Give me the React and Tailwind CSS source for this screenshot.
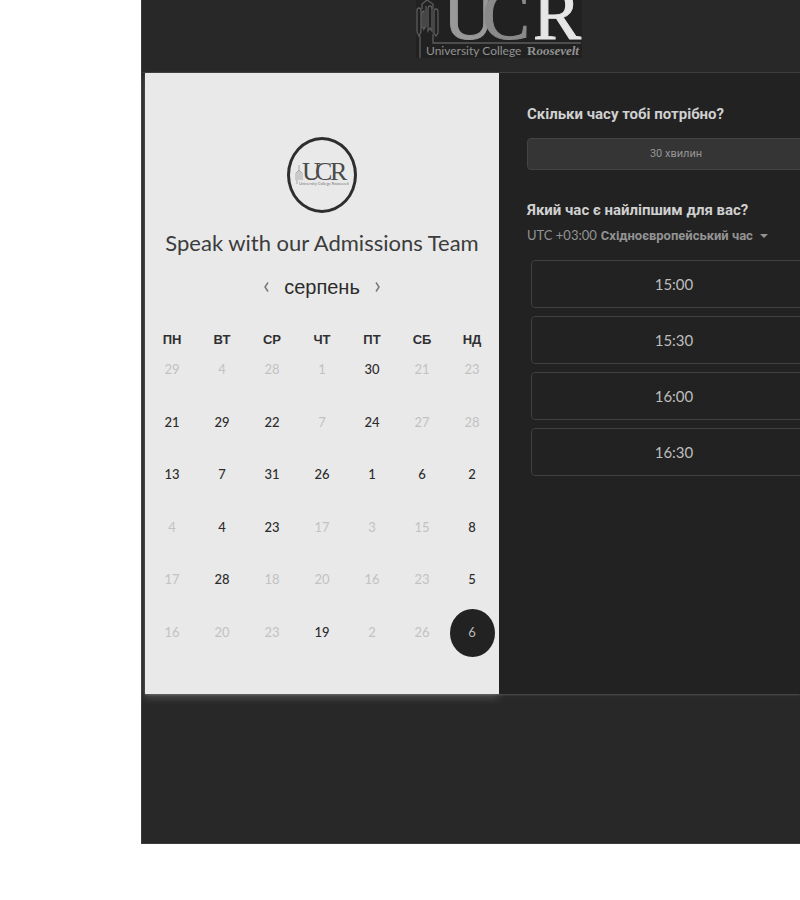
import React, { useState } from "react";

const weekdays = ["ПН", "ВТ", "СР", "ЧТ", "ПТ", "СБ", "НД"];

// A leading "*" marks a day that can be booked.
const weeks = [
  ["29", "4", "28", "1", "*30", "21", "23"],
  ["*21", "*29", "*22", "7", "*24", "27", "28"],
  ["*13", "*7", "*31", "*26", "*1", "*6", "*2"],
  ["4", "*4", "*23", "17", "3", "15", "*8"],
  ["17", "*28", "18", "20", "16", "23", "*5"],
  ["16", "20", "23", "*19", "2", "26", "*6"],
];

const slots = ["15:00", "15:30", "16:00", "16:30"];

function Tower() {
  return (
    <g fill="none" stroke="#5c5c5c" strokeWidth="1.3">
      <path d="M4 58V36M17 34V43H165M11 0V-6M11 0L6 4V9M11 0L17 4V9" />
      <path d="M1 11Q1 8 3 8Q5 8 5 11V32L3 36L1 32Z" />
      <path d="M6 14Q6 11 8 11V29L10 26V6M8 29L6 27V14" />
      <path d="M12 10Q12 6 14 6Q16 6 16 10V31L14 28L12 31Z" />
      <path d="M18 12Q18 9 20 9Q22 9 22 12V33L20 36L18 33Z" />
    </g>
  );
}

function HeaderLogo() {
  return (
    <svg viewBox="0 0 166 58" className="h-[58px] w-[166px]" role="img" aria-label="University College Roosevelt">
      <rect width="166" height="58" fill="#212121" />
      <Tower />
      <g fontFamily="'Liberation Serif', serif" fontSize="72">
        <text x="27" y="39" fill="#999999" stroke="#999999">U</text>
        <text x="66" y="39" fill="#8a8a8a" stroke="#8a8a8a">C</text>
        <text x="117" y="39" fill="#e6e6e6" stroke="#e6e6e6">R</text>
      </g>
      <text x="10" y="55" fontFamily="Lato, sans-serif" fontSize="12" fill="#929292">University College</text>
      <text x="111" y="55" fontFamily="'Liberation Serif', serif" fontSize="13" fontWeight="700" fill="#929292">
        R<tspan fontStyle="italic">oosevelt</tspan>
      </text>
    </svg>
  );
}

function BadgeLogo() {
  return (
    <svg viewBox="0 0 54 28" className="h-7 w-[54px]" role="img" aria-label="UCR">
      <g fill="none" stroke="#aaaaaa">
        <path d="M4 4V10M1 19V12L4 9L7 12V19M3 10V19M5 10V19M2 19V23" />
      </g>
      <g fontFamily="'Liberation Serif', serif" fontSize="26" fill="#4a4a4a">
        <text x="7" y="19">U</text>
        <text x="20" y="19">C</text>
        <text x="35" y="19">R</text>
      </g>
      <text x="4" y="24" fontFamily="Lato, sans-serif" fontSize="4" fill="#777777">University College Roosevelt</text>
    </svg>
  );
}

function Day({ value, selected, onSelect }) {
  const open = value.startsWith("*");
  const tone = selected
    ? "bg-[#222222] text-[#b8b8b8]"
    : open
      ? "font-medium text-[#2c2c2c]"
      : "text-[#c2c2c2]";
  return (
    <button
      type="button"
      disabled={!open}
      aria-pressed={selected}
      onClick={onSelect}
      className={`mx-auto block h-12 w-[45px] rounded-[50%] text-[13px] ${tone}`}
    >
      {value.replace("*", "")}
    </button>
  );
}

function Calendar() {
  const [selected, setSelected] = useState("5-6");
  return (
    <section className="w-[354px] shrink-0 bg-[#e9e9e9] px-0.5 pb-8 pt-16 text-[#303030] shadow-[0_4px_8px_rgba(233,233,233,0.2)]">
      <div className="mx-auto flex h-[76px] w-[70px] items-center justify-center rounded-[50%] border-3 border-[#2e2e2e]">
        <BadgeLogo />
      </div>
      <h1 className="mt-3 whitespace-nowrap text-center text-[22px] leading-9 text-[#3c3c3c]">
        Speak with our Admissions Team
      </h1>
      <div className="mt-2 flex h-9 items-center justify-center gap-2">
        <button type="button" aria-label="Попередній місяць" className="flex size-5 items-center justify-center text-[#777777]">
          <svg viewBox="0 0 16 16" className="size-4" fill="none" stroke="currentColor" strokeWidth="1.5">
            <path d="M10 3.500L7 8L10 12.500" />
          </svg>
        </button>
        <h2 className="font-['Liberation_Sans',sans-serif] text-xl text-[#2c2c2c]">серпень</h2>
        <button type="button" aria-label="Наступний місяць" className="flex size-5 items-center justify-center text-[#777777]">
          <svg viewBox="0 0 16 16" className="size-4" fill="none" stroke="currentColor" strokeWidth="1.5">
            <path d="M6 3.500L9 8L6 12.500" />
          </svg>
        </button>
      </div>
      <table className="mt-[21px] w-full table-fixed border-collapse">
        <thead>
          <tr className="h-5">
            {weekdays.map((day) => (
              <th key={day} scope="col" className="p-0 align-bottom font-['Liberation_Sans',sans-serif] text-[13px] leading-3">
                {day}
              </th>
            ))}
          </tr>
        </thead>
        <tbody>
          {weeks.map((week, row) => (
            <tr key={row} className="odd:h-[53px] even:h-[52px]">
              {week.map((value, col) => (
                <td key={col} className="p-0 align-top">
                  <Day
                    value={value}
                    selected={selected === `${row}-${col}`}
                    onSelect={() => setSelected(`${row}-${col}`)}
                  />
                </td>
              ))}
            </tr>
          ))}
        </tbody>
      </table>
    </section>
  );
}

function Booking() {
  return (
    <section className="min-w-0 grow overflow-hidden bg-[#222222] pl-7 pt-[31px]">
      <div className="w-[298px]">
        <h2 className="font-[Roboto,sans-serif] text-[15px] font-bold leading-5 text-[#d0d0d0]">
          Скільки часу тобі потрібно?
        </h2>
        <button
          type="button"
          className="mt-[14px] block h-8 w-full rounded-sm border border-[#444444] bg-[#353535] font-[Roboto,sans-serif] text-[11px] text-[#969696]"
        >
          30 хвилин
        </button>
        <h2 className="mt-[30px] font-[Roboto,sans-serif] text-[15px] font-bold leading-5 text-[#d0d0d0]">
          Який час є найліпшим для вас?
        </h2>
        <div className="mt-1 flex h-6 items-center gap-1 text-[13px] text-[#939393]">
          <label htmlFor="timezone" className="whitespace-nowrap">UTC +03:00</label>
          <div className="relative">
            <select
              id="timezone"
              className="block appearance-none bg-transparent pr-[14px] font-[Roboto,sans-serif] text-[13px] font-bold"
            >
              <option>Східноєвропейський час</option>
            </select>
            <svg viewBox="0 0 8 4" className="pointer-events-none absolute right-0 top-2 h-1 w-2" fill="currentColor">
              <path d="M0 0H8L4 4Z" />
            </svg>
          </div>
        </div>
        <ul className="mt-3 flex flex-col gap-2 pl-1 pr-2">
          {slots.map((slot) => (
            <li key={slot}>
              <button
                type="button"
                className="block h-12 w-full rounded-sm border border-[#404040] text-[15px] text-[#bdbdbd]"
              >
                {slot}
              </button>
            </li>
          ))}
        </ul>
      </div>
    </section>
  );
}

export default function App() {
  return (
    <div className="min-h-screen overflow-hidden bg-white font-[Lato,sans-serif]">
      <main className="ml-[141px] border-b border-l border-[#3c3c3c] bg-[#282828] pb-[149px]">
        <header className="flex h-[73px] justify-center border-b border-[#3c3c3c] pl-14">
          <div>
            <HeaderLogo />
          </div>
        </header>
        <div className="ml-[3px] flex min-h-[621px] shadow-[0_1px_2px_rgba(233,233,233,0.2)]">
          <Calendar />
          <Booking />
        </div>
      </main>
    </div>
  );
}
